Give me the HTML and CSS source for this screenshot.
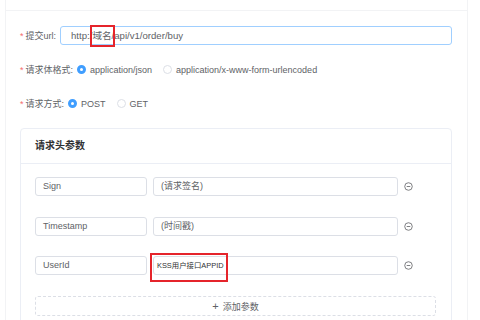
FILE: index.html
```html
<!DOCTYPE html>
<html lang="zh-CN">
<head>
  <meta charset="UTF-8">
  <title>接口配置</title>
  <link rel="stylesheet" href="styles.css">
</head>
<body>
  <div class="page">
    <div class="page-head"></div>

    <div class="form">
      <div class="form-item">
        <label class="label"><span class="req">*</span>提交url:</label>
        <div class="input url-input">
          http:/<span class="hl">域名<span class="mark mark-url"></span></span>/api/v1/order/buy
        </div>
      </div>

      <div class="form-item">
        <label class="label"><span class="req">*</span>请求体格式:</label>
        <div class="radios">
          <span class="radio"><i class="dot checked"></i>application/json</span>
          <span class="radio"><i class="dot"></i>application/x-www-form-urlencoded</span>
        </div>
      </div>

      <div class="form-item">
        <label class="label"><span class="req">*</span>请求方式:</label>
        <div class="radios">
          <span class="radio"><i class="dot checked"></i>POST</span>
          <span class="radio"><i class="dot"></i>GET</span>
        </div>
      </div>

      <div class="card">
        <div class="card-head">请求头参数</div>
        <div class="card-body">
          <div class="param-row">
            <div class="input key">Sign</div>
            <div class="input val">(请求签名)</div>
            <svg class="del" viewBox="0 0 10 10"><circle cx="5" cy="5" r="4.2" fill="none" stroke="#606266" stroke-width="0.9"/><line x1="3" y1="5" x2="7" y2="5" stroke="#606266" stroke-width="0.9"/></svg>
          </div>
          <div class="param-row">
            <div class="input key">Timestamp</div>
            <div class="input val">(时间戳)</div>
            <svg class="del" viewBox="0 0 10 10"><circle cx="5" cy="5" r="4.2" fill="none" stroke="#606266" stroke-width="0.9"/><line x1="3" y1="5" x2="7" y2="5" stroke="#606266" stroke-width="0.9"/></svg>
          </div>
          <div class="param-row">
            <div class="input key">UserId</div>
            <div class="input val dark">KSS用户接口APPID</div>
            <svg class="del" viewBox="0 0 10 10"><circle cx="5" cy="5" r="4.2" fill="none" stroke="#606266" stroke-width="0.9"/><line x1="3" y1="5" x2="7" y2="5" stroke="#606266" stroke-width="0.9"/></svg>
            <span class="mark mark-appid"></span>
          </div>
          <div class="add-btn"><span class="plus">+</span>添加参数</div>
        </div>
      </div>
    </div>
  </div>
</body>
</html>
```

FILE: styles.css
```css
html, body {
  margin: 0;
  padding: 0;
  background: #fff;
  font-family: "Liberation Sans", "Noto Sans CJK SC", sans-serif;
  color: #606266;
  overflow: hidden;
}
.page {
  margin-left: 5px;
  width: 461px;
  height: 320px;
  border-left: 1px solid #f2f3f5;
  border-right: 1px solid #f2f3f5;
}
.page-head {
  height: 10px;
  border-bottom: 1px solid #f2f3f5;
}
.form {
  padding: 14px 15px 0 14px;
}
.form-item {
  display: flex;
  align-items: center;
  height: 19px;
  margin-top: 1px;
  margin-bottom: 15px;
  font-size: 9px;
}
.label {
  color: #606266;
  padding-right: 4px;
  white-space: nowrap;
}
.req {
  color: #f56c6c;
  margin-right: 2px;
}
.input {
  position: relative;
  box-sizing: border-box;
  height: 19px;
  line-height: 17px;
  border: 1px solid #dcdfe6;
  border-radius: 3px;
  padding: 0 7px;
  font-size: 9px;
  color: #606266;
  white-space: nowrap;
}
.url-input {
  flex: 1;
  border-color: #a0cfff;
  padding-left: 10px;
  font-size: 9.6px;
}
.hl {
  position: relative;
}
.mark {
  position: absolute;
  border: 2px solid #e5242b;
}
.mark-url {
  left: -2px;
  right: -3px;
  top: -5px;
  bottom: -6px;
}
.radios {
  display: flex;
  align-items: center;
  gap: 11px;
}
.radio {
  display: flex;
  align-items: center;
  gap: 4px;
}
.dot {
  box-sizing: border-box;
  width: 9px;
  height: 9px;
  border: 1px solid #dcdfe6;
  border-radius: 50%;
  background: #fff;
}
.dot.checked {
  border: 3px solid #409eff;
}
.card {
  width: 432px;
  box-sizing: border-box;
  border: 1px solid #ebeef5;
  border-radius: 4px;
}
.card-head {
  height: 34px;
  line-height: 34px;
  padding-left: 14px;
  font-size: 10px;
  font-weight: bold;
  color: #303133;
  border-bottom: 1px solid #ebeef5;
}
.card-body {
  padding: 13px 14px;
}
.param-row {
  position: relative;
  display: flex;
  align-items: center;
  gap: 6px;
  margin-bottom: 20.5px;
}
.key {
  width: 112px;
}
.val {
  width: 245px;
}
.val.dark {
  color: #303133;
  font-size: 7.4px;
  padding-left: 3px;
}
.del {
  width: 9px;
  height: 9px;
}
.mark-appid {
  left: 115px;
  top: -3px;
  width: 74px;
  height: 25px;
}
.add-btn {
  box-sizing: border-box;
  width: 401px;
  height: 20px;
  line-height: 18px;
  border: 1px dashed #dcdfe6;
  border-radius: 3px;
  text-align: center;
  font-size: 9px;
  color: #606266;
}
.plus {
  font-size: 11px;
  margin-right: 4px;
}
```
